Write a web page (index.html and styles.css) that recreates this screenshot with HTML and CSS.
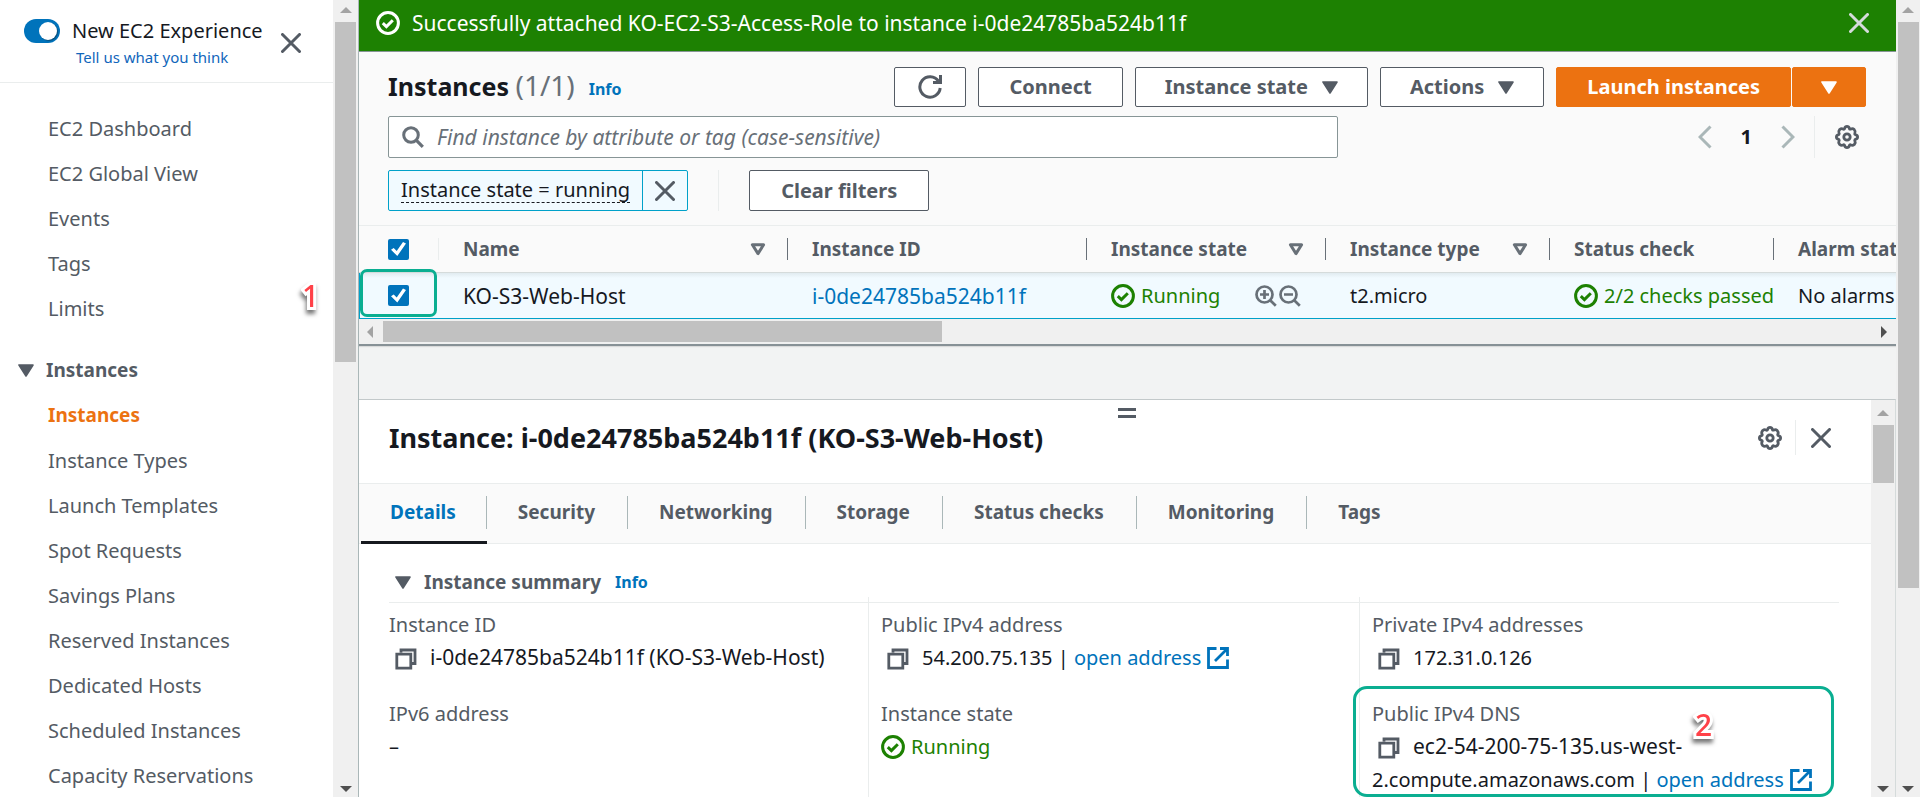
FILE: index.html
```html
<!DOCTYPE html>
<html lang="en">
<head>
<meta charset="utf-8">
<title>Instances | EC2 Management Console</title>
<link rel="stylesheet" href="styles.css">
</head>
<body>
<svg class="defs" aria-hidden="true">
  <symbol id="i-x" viewBox="0 0 20 20"><path d="M1.5 1.5l17 17M18.5 1.5l-17 17" fill="none" stroke="currentColor" stroke-width="3" stroke-linecap="round"/></symbol>
  <symbol id="i-ok" viewBox="0 0 24 24"><g fill="none" stroke="currentColor" stroke-width="3"><circle cx="12" cy="12" r="10.4"/><path d="M6.8 12.2l3.6 3.4 6.4-6.4"/></g></symbol>
  <symbol id="i-caret" viewBox="0 0 16 13"><path d="M1 1h14L8 12z" fill="currentColor" stroke="currentColor" stroke-width="1.6" stroke-linejoin="round"/></symbol>
  <symbol id="i-sort" viewBox="0 0 16 13"><path d="M2.4 1.8h11.2L8 10.6z" fill="none" stroke="currentColor" stroke-width="3" stroke-linejoin="round"/></symbol>
  <symbol id="i-gear" viewBox="0 0 24 24"><path d="M9.8 3.1 Q10.2 1.4 12 1.4 Q13.8 1.4 14.2 3.1 L14.6 4 Q15.2 4.4 16 4 Q17.6 3 19.2 4.6 Q20.8 6.4 19.9 8 Q19.5 8.9 20 9.4 L20.9 9.8 Q22.6 10.2 22.6 12 Q22.6 13.8 20.9 14.2 L20 14.6 Q19.5 15.2 19.9 16 Q20.8 17.6 19.4 19.4 Q17.6 20.8 16 20 Q15.2 19.5 14.6 20 L14.2 20.9 Q13.8 22.6 12 22.6 Q10.2 22.6 9.8 20.9 L9.4 20 Q8.8 19.5 8 20 Q6.4 20.8 4.6 19.4 Q3.2 17.6 4 16 Q4.5 15.2 4 14.6 L3.1 14.2 Q1.4 13.8 1.4 12 Q1.4 10.2 3.1 9.8 L4 9.4 Q4.5 8.8 4 8 Q3.2 6.4 4.6 4.6 Q6.4 3.2 8 4 Q8.8 4.5 9.4 4Z" fill="none" stroke="currentColor" stroke-width="2.8"/><circle cx="12" cy="12" r="3.2" fill="none" stroke="currentColor" stroke-width="2.8"/></symbol>
  <symbol id="i-copy" viewBox="0 0 22 22"><path d="M6 4.500V2h14v13.500h-3.500M1.800 6.200h14v14h-14z" fill="none" stroke="currentColor" stroke-width="2.8"/></symbol>
  <symbol id="i-ext" viewBox="0 0 22 22"><path d="M9.500 1.500h-8v19h19v-8M13 1.500h7.500V9M20 2L8 14" fill="none" stroke="currentColor" stroke-width="2.800"/></symbol>
  <symbol id="i-search" viewBox="0 0 22 22"><circle cx="9" cy="9" r="7.300" fill="none" stroke="currentColor" stroke-width="3"/><path d="M14.200 14.200l6.600 6.600" stroke="currentColor" stroke-width="3.200"/></symbol>
  <symbol id="i-plus" viewBox="0 0 22 22"><g fill="none" stroke="currentColor" stroke-width="2.700"><circle cx="9.500" cy="9.500" r="8"/><path d="M15.200 15.200l5.600 5.600M9.500 5v9M5 9.500h9"/></g></symbol>
  <symbol id="i-minus" viewBox="0 0 22 22"><g fill="none" stroke="currentColor" stroke-width="2.700"><circle cx="9.500" cy="9.500" r="8"/><path d="M15.200 15.200l5.600 5.600M5 9.500h9"/></g></symbol>
  <symbol id="i-up" viewBox="0 0 12 6"><path d="M0 6L6 0l6 6z" fill="currentColor"/></symbol>
  <symbol id="i-down" viewBox="0 0 12 6"><path d="M0 0h12L6 6z" fill="currentColor"/></symbol>
</svg>

<div class="app">
  <aside class="sidebar">
    <div class="sidebar-body">
      <div class="experience">
        <input class="toggle" type="checkbox" role="switch" id="exp" checked>
        <div class="experience-text">
          <label for="exp">New EC2 Experience</label>
          <a href="#">Tell us what you think</a>
        </div>
        <button class="icon-btn" aria-label="Close navigation"><svg class="ic20"><use href="#i-x"/></svg></button>
      </div>
      <nav class="nav">
        <a href="#">EC2 Dashboard</a>
        <a href="#">EC2 Global View</a>
        <a href="#">Events</a>
        <a href="#">Tags</a>
        <a href="#">Limits</a>
        <button class="nav-group"><svg class="caret"><use href="#i-caret"/></svg>Instances</button>
        <a href="#" class="current">Instances</a>
        <a href="#">Instance Types</a>
        <a href="#">Launch Templates</a>
        <a href="#">Spot Requests</a>
        <a href="#">Savings Plans</a>
        <a href="#">Reserved Instances</a>
        <a href="#">Dedicated Hosts</a>
        <a href="#">Scheduled Instances</a>
        <a href="#">Capacity Reservations</a>
      </nav>
      <span class="callout callout-1">1</span>
    </div>
    <div class="vbar">
      <svg class="arrow dim"><use href="#i-up"/></svg>
      <div class="vtrack"><div class="vthumb thumb-nav"></div></div>
      <svg class="arrow"><use href="#i-down"/></svg>
    </div>
  </aside>

  <main class="main">
    <div class="flash" role="status">
      <svg class="ic24"><use href="#i-ok"/></svg>
      <p>Successfully attached KO-EC2-S3-Access-Role to instance i-0de24785ba524b11f</p>
      <button class="icon-btn flash-x" aria-label="Dismiss"><svg class="ic20"><use href="#i-x"/></svg></button>
    </div>

    <section class="list">
      <header class="toolbar">
        <div class="title-row">
          <h1>Instances <span>(1/1)</span></h1>
          <a class="info" href="#">Info</a>
          <div class="actions">
            <button class="btn" aria-label="Refresh"><svg class="ic24" viewBox="0 0 24 24"><path d="M20.500 6.200A10.200 10.200 0 1 0 22.200 13" fill="none" stroke="currentColor" stroke-width="3"/><path d="M22.500 0v7.500H15" fill="none" stroke="currentColor" stroke-width="3"/></svg></button>
            <button class="btn">Connect</button>
            <button class="btn menu">Instance state<svg class="caret"><use href="#i-caret"/></svg></button>
            <button class="btn menu">Actions<svg class="caret"><use href="#i-caret"/></svg></button>
            <div class="split">
              <button class="btn primary">Launch instances</button>
              <button class="btn primary" aria-label="More launch options"><svg class="caret"><use href="#i-caret"/></svg></button>
            </div>
          </div>
        </div>
        <div class="search-row">
          <label class="search">
            <svg class="ic22"><use href="#i-search"/></svg>
            <input type="text" aria-label="Find instance" placeholder="Find instance by attribute or tag (case-sensitive)">
          </label>
          <div class="pager">
            <button class="icon-btn page-arrow" aria-label="Previous page"><svg class="chev" viewBox="0 0 14 24"><path d="M12.500 1.500L2 12l10.500 10.500" fill="none" stroke="currentColor" stroke-width="3"/></svg></button>
            <button class="icon-btn page-num">1</button>
            <button class="icon-btn page-arrow" aria-label="Next page"><svg class="chev" viewBox="0 0 14 24"><path d="M1.500 1.500L12 12 1.500 22.500" fill="none" stroke="currentColor" stroke-width="3"/></svg></button>
            <button class="icon-btn prefs" aria-label="Preferences"><svg class="ic24"><use href="#i-gear"/></svg></button>
          </div>
        </div>
        <div class="filter-row">
          <div class="token">
            <button class="token-text"><span>Instance state = running</span></button>
            <button class="token-x" aria-label="Remove filter"><svg class="ic20"><use href="#i-x"/></svg></button>
          </div>
          <div class="clear"><button class="btn">Clear filters</button></div>
        </div>
      </header>

      <div class="table-clip">
        <table>
          <colgroup><col class="c-sel"><col class="c-name"><col class="c-id"><col class="c-state"><col class="c-type"><col class="c-check"><col class="c-alarm"></colgroup>
          <thead>
            <tr>
              <th class="sel"><div class="th light"><input class="check" type="checkbox" aria-label="Select all" checked></div></th>
              <th><div class="th">Name<svg class="caret"><use href="#i-sort"/></svg></div></th>
              <th><div class="th">Instance ID</div></th>
              <th><div class="th">Instance state<svg class="caret"><use href="#i-sort"/></svg></div></th>
              <th><div class="th">Instance type<svg class="caret"><use href="#i-sort"/></svg></div></th>
              <th><div class="th">Status check</div></th>
              <th><div class="th">Alarm status</div></th>
            </tr>
          </thead>
          <tbody>
            <tr>
              <td class="sel"><input class="check" type="checkbox" aria-label="Select KO-S3-Web-Host" checked><span class="mark mark-row"></span></td>
              <td class="wide">KO-S3-Web-Host</td>
              <td class="wide"><a href="#">i-0de24785ba524b11f</a></td>
              <td><div class="cell"><span class="ok"><svg class="ic24"><use href="#i-ok"/></svg>Running</span><span class="zooms"><button class="icon-btn" aria-label="Filter by this value"><svg class="ic22"><use href="#i-plus"/></svg></button><button class="icon-btn" aria-label="Exclude this value"><svg class="ic22"><use href="#i-minus"/></svg></button></span></div></td>
              <td>t2.micro</td>
              <td><span class="ok"><svg class="ic24"><use href="#i-ok"/></svg>2/2 checks passed</span></td>
              <td>No alarms</td>
            </tr>
          </tbody>
        </table>
      </div>
      <div class="hbar">
        <svg class="harrow dim" viewBox="0 0 6 12"><path d="M6 0L0 6l6 6z" fill="currentColor"/></svg>
        <div class="htrack"><div class="hthumb"></div></div>
        <svg class="harrow" viewBox="0 0 6 12"><path d="M0 0l6 6-6 6z" fill="currentColor"/></svg>
      </div>
    </section>

    <section class="panel">
      <div class="panel-body">
        <header class="panel-head">
          <span class="handle"></span>
          <h2>Instance: i-0de24785ba524b11f (KO-S3-Web-Host)</h2>
          <button class="icon-btn" aria-label="Panel preferences"><svg class="ic24"><use href="#i-gear"/></svg></button>
          <button class="icon-btn panel-x" aria-label="Close panel"><svg class="ic20"><use href="#i-x"/></svg></button>
        </header>
        <div class="tabs" role="tablist">
          <button role="tab" aria-selected="true" class="active"><span>Details</span></button>
          <button role="tab"><span>Security</span></button>
          <button role="tab"><span>Networking</span></button>
          <button role="tab"><span>Storage</span></button>
          <button role="tab"><span>Status checks</span></button>
          <button role="tab"><span>Monitoring</span></button>
          <button role="tab"><span>Tags</span></button>
        </div>
        <div class="summary">
          <div class="summary-head">
            <svg class="caret"><use href="#i-caret"/></svg>
            <h3>Instance summary</h3>
            <a class="info" href="#">Info</a>
          </div>
          <div class="cols">
            <dl>
              <dt>Instance ID</dt>
              <dd class="wide"><svg class="copy"><use href="#i-copy"/></svg>i-0de24785ba524b11f (KO-S3-Web-Host)</dd>
              <dt>IPv6 address</dt>
              <dd>–</dd>
            </dl>
            <dl>
              <dt>Public IPv4 address</dt>
              <dd><svg class="copy"><use href="#i-copy"/></svg>54.200.75.135 | <a href="#">open address<svg class="ext"><use href="#i-ext"/></svg></a></dd>
              <dt>Instance state</dt>
              <dd><span class="ok"><svg class="ic24"><use href="#i-ok"/></svg>Running</span></dd>
            </dl>
            <dl>
              <dt>Private IPv4 addresses</dt>
              <dd><svg class="copy"><use href="#i-copy"/></svg>172.31.0.126</dd>
              <dt>Public IPv4 DNS</dt>
              <dd><svg class="copy"><use href="#i-copy"/></svg><span class="wide">ec2-54-200-75-135.us-west-</span><br>2.compute.amazonaws.com | <a href="#">open address<svg class="ext"><use href="#i-ext"/></svg></a></dd>
              <dd class="mark mark-dns"></dd>
              <dd class="callout callout-2">2</dd>
            </dl>
          </div>
        </div>
      </div>
      <div class="vbar">
        <svg class="arrow dim"><use href="#i-up"/></svg>
        <div class="vtrack"><div class="vthumb thumb-panel"></div></div>
        <svg class="arrow"><use href="#i-down"/></svg>
      </div>
    </section>
  </main>

  <div class="vbar">
    <svg class="arrow dim"><use href="#i-up"/></svg>
    <div class="vtrack"><div class="vthumb thumb-page"></div></div>
    <svg class="arrow"><use href="#i-down"/></svg>
  </div>
</div>
</body>
</html>
```
FILE: styles.css
```css
* { box-sizing: border-box; }
body, h1, h2, h3, p, dl, dt, dd { margin: 0; }
body {
  font: 20px/32px "Noto Sans", "Open Sans", sans-serif;
  color: #16191f;
  background: #f2f3f3;
}
a { color: #0073bb; text-decoration: none; }
button, input { font: inherit; color: inherit; }
button { cursor: pointer; }
svg { flex: none; display: block; }

.defs { position: absolute; width: 0; height: 0; }
.ic20 { width: 20px; height: 20px; }
.ic22 { width: 22px; height: 22px; }
.ic24 { width: 24px; height: 24px; }
.caret { width: 16px; height: 13px; }
.icon-btn { display: flex; align-items: center; border: 0; padding: 0; background: none; color: #545b64; }
.wide { font-size: 21px; }

.app { display: flex; height: 100vh; overflow: hidden; }

/* scroll bars */
.vbar {
  flex: none; width: 24px; padding: 7px 0 5px; background: #f0f0f0;
  display: flex; flex-direction: column; align-items: center;
}
.vtrack { flex: 1; width: 21px; padding: 9px 0; }
.arrow { width: 12px; height: 6px; color: #505050; }
.dim { color: #a3a3a3; }
.vthumb { background: #c1c1c1; }
.thumb-nav { height: 45%; }
.thumb-page { height: 75%; }
.thumb-panel { height: 58px; }

/* side navigation */
.sidebar { flex: none; width: 359px; display: flex; background: #fff; border-right: 1px solid #aab7b8; }
.sidebar .vbar { width: 25px; }
.sidebar-body { position: relative; flex: 1; overflow: hidden; }
.experience { display: flex; align-items: flex-start; height: 83px; padding: 19px 32px 0 24px; border-bottom: 1px solid #eaeded; }
.toggle {
  appearance: none; flex: none; width: 36px; height: 24px; margin: 0;
  padding: 3px; border-radius: 12px; background: #0073bb;
}
.toggle::before { content: ""; display: block; width: 18px; height: 18px; margin-left: auto; border-radius: 50%; background: #fff; box-shadow: 1px 1px 1px #16191f66; }
.experience-text { flex: 1; margin-left: 12px; line-height: 24px; white-space: nowrap; }
.experience-text a { display: block; padding-left: 4px; font-size: 15px; line-height: 28px; color: #1166bb; }
.experience .icon-btn { margin-top: 14px; }
.nav { display: flex; flex-direction: column; padding-top: 23px; line-height: 45px; color: #545b64; }
.nav a { padding-left: 48px; color: inherit; }
.nav .current { font-size: 19px; font-weight: 700; color: #ec7211; }
.nav-group { display: flex; align-items: center; gap: 12px; margin-top: 17px; padding: 0 0 0 18px; border: 0; background: none; font-size: 19px; font-weight: 700; }

/* flash bar */
.main { flex: 1; min-width: 0; display: flex; flex-direction: column; }
.flash {
  flex: none; display: flex; align-items: center; gap: 12px; height: 52px; padding: 0 27px 5px 17px;
  background: #1d8102; color: #fff; border-bottom: 1px solid #879596;
}
.flash p { flex: 1; font-size: 21px; }
.flash .flash-x { color: #d5dbdb; }

/* instance list */
.list { flex: none; border-bottom: 2px solid #879196; box-shadow: 0 1px 1px #0000001a; background: #fafafa; }
.toolbar { padding: 15px 30px 14px 29px; display: flex; flex-direction: column; border-bottom: 1px solid #eaeded; }
.title-row { display: flex; align-items: center; height: 40px; margin-bottom: 9px; }
h1 { font-size: 25px; line-height: 36px; padding-bottom: 4px; }
h1 span { font-size: 28px; font-weight: 400; color: #687078; }
.info { font-size: 16px; font-weight: 700; margin-left: 14px; }
.title-row .info { padding-top: 3px; }
.actions { flex: 1; display: flex; justify-content: flex-end; gap: 12px; }
.btn {
  display: flex; align-items: center; gap: 14px; height: 40px; padding: 0 30px;
  border: 1px solid #545b64; border-radius: 2px; background: #fff; color: #545b64; font-weight: 700; white-space: nowrap;
}
.btn[aria-label="Refresh"] { padding: 0 23px; }
.btn.menu { padding: 0 29px; }
.split { display: flex; gap: 1px; }
.primary { background: #ec7211; border-color: #ec7211; color: #fff; }
.split .primary:last-child { padding: 0 28px; }
.search-row { display: flex; justify-content: space-between; height: 42px; margin-bottom: 12px; }
.search { flex: 0 1 950px; display: flex; align-items: center; padding: 0 13px; gap: 13px; border: 1px solid #879596; border-radius: 2px; background: #fff; color: #687078; }
.search input { flex: 1; min-width: 0; border: 0; padding: 0; background: none; outline: 0; font-size: 21px; }
.search input::placeholder { color: #687078; font-style: italic; opacity: 1; }
.pager { display: flex; align-items: center; gap: 29px; padding-right: 7px; }
.chev { width: 14px; height: 24px; }
.pager .page-arrow { color: #aab7b8; }
.pager .page-num { color: #16191f; font-weight: 700; }
.pager .prefs { height: 42px; margin-left: -10px; padding-left: 20px; border-left: 1px solid #eaeded; }
.filter-row { display: flex; height: 41px; }
.token { display: flex; border: 1px solid #00a1c9; border-radius: 2px; background: #f1faff; }
.token button { border: 0; background: none; }
.token-text { padding: 0 12px; }
.token-text span { display: block; line-height: 24px; border-bottom: 1px dashed #16191f; }
.token .token-x { display: flex; align-items: center; padding: 0 12px; border-left: 1px solid #00a1c9; color: #545b64; }
.clear { margin-left: 30px; padding-left: 30px; border-left: 1px solid #eaeded; }
.clear .btn { height: 41px; padding: 0 31px; }

.table-clip { overflow: hidden; }
table { width: 1680px; table-layout: fixed; border-collapse: separate; border-spacing: 0; }
.c-sel { width: 80px; }
.c-name { width: 349px; }
.c-id { width: 299px; }
.c-state { width: 239px; }
.c-type, .c-check { width: 224px; }
th { height: 47px; padding: 0; text-align: left; font-size: 19px; color: #545b64; border-bottom: 1px solid #d5dbdb; }
.th { display: flex; align-items: center; justify-content: space-between; height: 22px; padding: 0 21px 0 24px; border-right: 1px solid #687078; white-space: nowrap; }
.th.light { border-right-color: #eaeded; }
.th .caret { color: #687078; }
.sel .th { padding-left: 29px; }
td { height: 46px; padding: 0 0 0 24px; background: #f1faff; border-bottom: 1px solid #00a1c9; overflow: hidden; white-space: nowrap; background-image: linear-gradient(#e1ebf0, #f1faff 5px); }
td.sel { position: relative; overflow: visible; padding-left: 28px; border-left: 1px solid #00a1c9; }
.cell { display: flex; justify-content: space-between; padding-right: 25px; }
.zooms { display: flex; gap: 2px; }
.zooms .icon-btn { color: #687078; }
.ok { display: flex; align-items: center; gap: 6px; color: #1d8102; }
.check { appearance: none; display: block; width: 21px; height: 21px; margin: 0; padding: 3px; border-radius: 2px; background: #0073bb; }
.check::before { content: ""; display: block; width: 15px; height: 15px; background: #fff; clip-path: polygon(0 55%, 18% 43%, 38% 64%, 80% 3%, 100% 14%, 42% 96%); }

.hbar { display: flex; align-items: center; height: 25px; padding: 0 9px 0 8px; background: #f0f0f0; }
.harrow { width: 6px; height: 12px; color: #505050; }
.harrow.dim { color: #a3a3a3; }
.htrack { flex: 1; padding: 0 10px; }
.hthumb { width: 559px; height: 21px; background: #c1c1c1; }

/* detail panel */
.panel { flex: 1; min-height: 0; display: flex; margin-top: 53px; border-top: 1px solid #c3c9ca; border-right: 1px solid #d5dbdb; background: #fff; }
.panel .vbar { padding-top: 10px; }
.panel-body { flex: 1; min-width: 0; overflow: hidden; }
.panel-head { position: relative; display: flex; align-items: center; height: 84px; padding: 0 40px 8px 30px; border-bottom: 1px solid #eaeded; }
.handle { position: absolute; top: 8px; left: 0; right: 0; width: 18px; height: 10px; margin: 0 auto; border: solid #545b64; border-width: 3px 0; }
.panel-head .handle { left: 24px; }
h2 { flex: 1; font-size: 27px; }
.panel .panel-x { height: 35px; margin-left: 13px; padding-left: 15px; border-left: 1px solid #eaeded; }
.tabs { display: flex; height: 60px; padding-left: 2px; background: #fafafa; border-bottom: 1px solid #eaeded; }
.tabs button { display: flex; align-items: center; height: 60px; padding: 0; border: 0; border-bottom: 3px solid transparent; background: none; color: #545b64; font-size: 19px; font-weight: 700; }
.tabs span { padding: 0 31px; line-height: 33px; border-right: 1px solid #aab7b8; }
.tabs button:not(.active) span { padding-right: 32px; }
.tabs button:last-child span { border: 0; }
.tabs .active { color: #0073bb; border-bottom-color: #16191f; }
.tabs .active span { padding: 0 30px 0 29px; }
.summary { padding: 18px 32px 0 30px; }
.summary-head { display: flex; align-items: center; height: 41px; padding-left: 6px; border-bottom: 1px solid #eaeded; color: #545b64; }
h3 { margin-left: 13px; font-size: 19px; }
.cols { display: grid; grid-template-columns: 479px 491px 1fr; margin-top: -6px; }
dl { position: relative; padding: 12px 0 20px 12px; border-left: 1px solid #eaeded; white-space: nowrap; }
dl:first-child { padding-left: 0; border: 0; }
dt { color: #545b64; line-height: 32px; }
dd { line-height: 33px; }
dt ~ dt { margin-top: 24px; }
.copy { display: inline-block; width: 22px; height: 22px; margin: 0 13px 0 6px; vertical-align: -5px; color: #545b64; }
.ext { display: inline-block; width: 22px; height: 22px; margin-left: 6px; vertical-align: -4px; }

/* annotations */
.mark { position: absolute; border: 3px solid #0aae91; pointer-events: none; }
.mark-row { inset: -4px 2px 1px 0; border-radius: 7px; }
.mark-dns { left: -7px; top: 89px; width: 481px; height: 111px; border-radius: 14px; }
.callout {
  position: absolute; font: 500 30px/32px "Noto Sans", sans-serif; color: #ff4148;
  -webkit-text-stroke: 6px #fff; paint-order: stroke fill; filter: drop-shadow(-1px 4px 2px #0008);
}
.callout-1 { left: 302px; top: 280px; }
.callout-2 { left: 335px; top: 112px; }
```
